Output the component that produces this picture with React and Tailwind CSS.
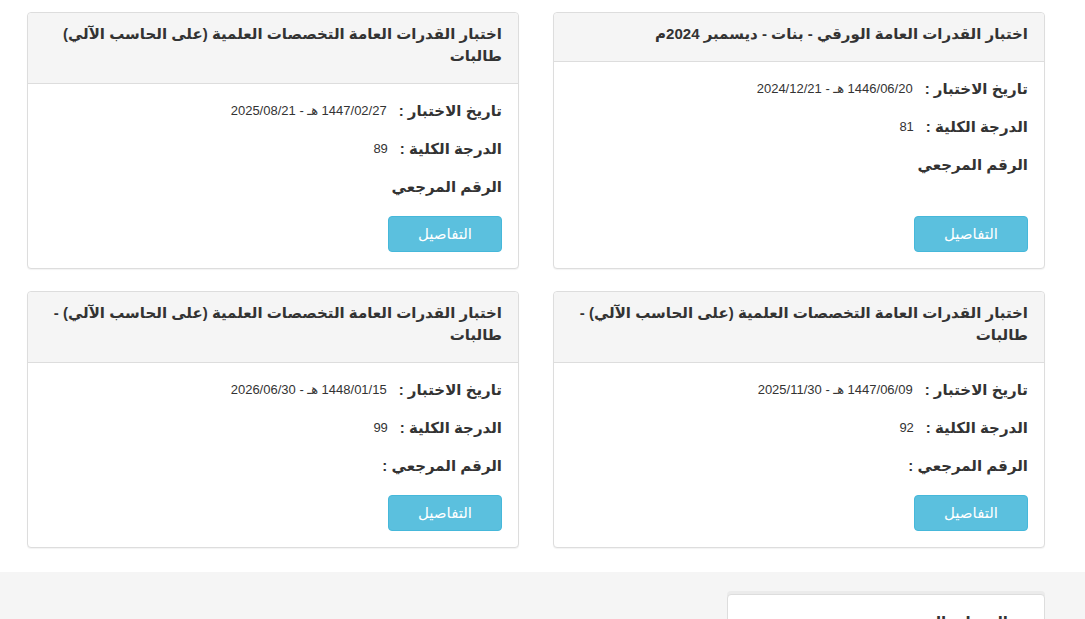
const exams = [
  {
    title: ["اختبار القدرات العامة الورقي - بنات - ديسمبر 2024م"],
    date: "1446/06/20 هـ - 2024/12/21",
    score: "81",
    ref: "الرقم المرجعي",
  },
  {
    title: ["اختبار القدرات العامة التخصصات العلمية (على الحاسب الآلي)", "طالبات"],
    date: "1447/02/27 هـ - 2025/08/21",
    score: "89",
    ref: "الرقم المرجعي",
  },
  {
    title: ["اختبار القدرات العامة التخصصات العلمية (على الحاسب الآلي) -", "طالبات"],
    date: "1447/06/09 هـ - 2025/11/30",
    score: "92",
    ref: "الرقم المرجعي :",
  },
  {
    title: ["اختبار القدرات العامة التخصصات العلمية (على الحاسب الآلي) -", "طالبات"],
    date: "1448/01/15 هـ - 2026/06/30",
    score: "99",
    ref: "الرقم المرجعي :",
  },
];

function ExamCard({ exam }) {
  return (
    <div className="flex flex-col bg-white border border-[#dddddd] rounded-[4px] shadow-[0_1px_1px_rgba(0,0,0,0.05)]">
      {/* header */}
      <div className="bg-[#f5f5f5] border-b border-[#dddddd] rounded-t-[4px] px-[16px] pt-[10px] pb-[16px]">
        <h3 className="text-[15px] leading-[22px] font-bold text-[#333333]">
          {exam.title.map((line, i) => (
            <span key={i} className="block whitespace-nowrap">{line}</span>
          ))}
        </h3>
      </div>

      {/* body */}
      <div className="flex flex-col flex-1 px-[16px] pt-[8px] pb-[16px]">
        <div className="flex items-center h-[38px] gap-[12px]">
          <span className="text-[15px] font-bold text-[#333333]">تاريخ الاختبار :</span>
          <span className="text-[13px] text-[#333333]">{exam.date}</span>
        </div>
        <div className="flex items-center h-[38px] gap-[12px]">
          <span className="text-[15px] font-bold text-[#333333]">الدرجة الكلية :</span>
          <span className="text-[13px] text-[#333333]">{exam.score}</span>
        </div>
        <div className="flex items-center h-[38px]">
          <span className="text-[15px] font-bold text-[#333333]">{exam.ref}</span>
        </div>
        <div className="mt-auto pt-[10px]">
          <button className="w-[114px] h-[36px] bg-[#5bc0de] border border-[#46b8da] rounded-[4px] text-white text-[15px]">
            التفاصيل
          </button>
        </div>
      </div>
    </div>
  );
}

export default function App() {
  return (
    <div
      dir="rtl"
      className="min-h-screen bg-white"
      style={{ fontFamily: '"Liberation Sans", "DejaVu Sans", sans-serif' }}
    >
      {/* ================= EXAMS ================= */}
      <section className="pt-[12px] pb-[24px] pr-[40px] pl-[27px]">
        <div className="grid grid-cols-2 gap-x-[34px] gap-y-[22px]">
          {exams.map((exam, i) => (
            <ExamCard key={i} exam={exam} />
          ))}
        </div>
      </section>

      {/* ================= NEXT SECTION ================= */}
      <section className="bg-[#f5f5f5] pt-[22px] pb-[40px] pr-[40px] pl-[27px] min-h-[200px]">
        <div className="w-[318px] bg-white border border-[#dddddd] rounded-[4px] shadow-[0_-3px_0_#ebebeb]">
          <div className="px-[16px] pt-[16px] pb-[16px]">
            <h3 className="text-[15px] font-bold text-[#333333] pr-[20px]">الدورات التدريبية</h3>
          </div>
        </div>
      </section>
    </div>
  );
}
